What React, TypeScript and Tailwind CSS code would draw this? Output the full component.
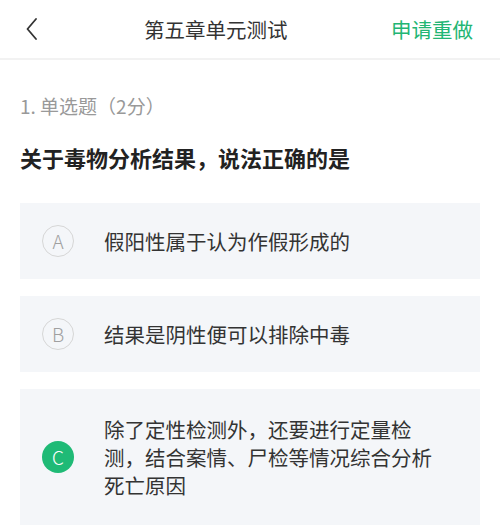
const font = { fontFamily: '"Noto Sans CJK SC", "Noto Sans", sans-serif' };

type Option = { key: string; text: string; selected?: boolean };

const options: Option[] = [
  { key: "A", text: "假阳性属于认为作假形成的" },
  { key: "B", text: "结果是阴性便可以排除中毒" },
  {
    key: "C",
    text: "除了定性检测外，还要进行定量检测，结合案情、尸检等情况综合分析死亡原因",
    selected: true,
  },
];

const OptionCard = ({ option }: { option: Option }) => {
  return (
    <div
      className={
        "flex items-center bg-[#f4f6f9] pl-[22px] " +
        (option.selected ? "py-[26px]" : "h-[76px]")
      }
    >
      {option.selected ? (
        <div className="w-[32px] h-[32px] rounded-full bg-[#1fba76] flex items-center justify-center text-white text-[19px] font-light shrink-0">
          {option.key}
        </div>
      ) : (
        <div className="w-[32px] h-[32px] rounded-full border-[1.5px] border-[#d6d6d6] flex items-center justify-center text-[#a0a0a0] text-[19px] font-light shrink-0">
          {option.key}
        </div>
      )}
      <div className="ml-[30px] w-[340px] text-[20.5px] leading-[28px] text-[#333333]">
        {option.text}
      </div>
    </div>
  );
};

export default function App() {
  return (
    <div className="w-[500px] h-[532px] bg-white overflow-hidden" style={font}>
      <div className="h-[60px] flex items-center border-b-2 border-[#f2f2f2] relative">
        <svg
          className="ml-[26px]"
          width="12"
          height="22"
          viewBox="0 0 12 22"
          fill="none"
        >
          <path
            d="M10 1 L1.5 11 L10 21"
            stroke="#333"
            strokeWidth="1.8"
            strokeLinecap="round"
            strokeLinejoin="round"
          />
        </svg>
        <span className="ml-[106px] text-[20.5px] text-[#333333]">
          第五章单元测试
        </span>
        <span className="ml-auto mr-[27px] text-[20.5px] text-[#22b573]">
          申请重做
        </span>
      </div>
      <div className="px-5">
        <div className="pt-[34px] text-[19px] leading-[24px] text-[#999999]">
          1. 单选题（2分）
        </div>
        <div className="mt-[25px] text-[22px] leading-[28px] font-bold text-[#222222]">
          关于毒物分析结果，说法正确的是
        </div>
        <div className="mt-[32px] flex flex-col gap-[17px]">
          {options.map((o) => (
            <OptionCard key={o.key} option={o} />
          ))}
        </div>
      </div>
    </div>
  );
}
